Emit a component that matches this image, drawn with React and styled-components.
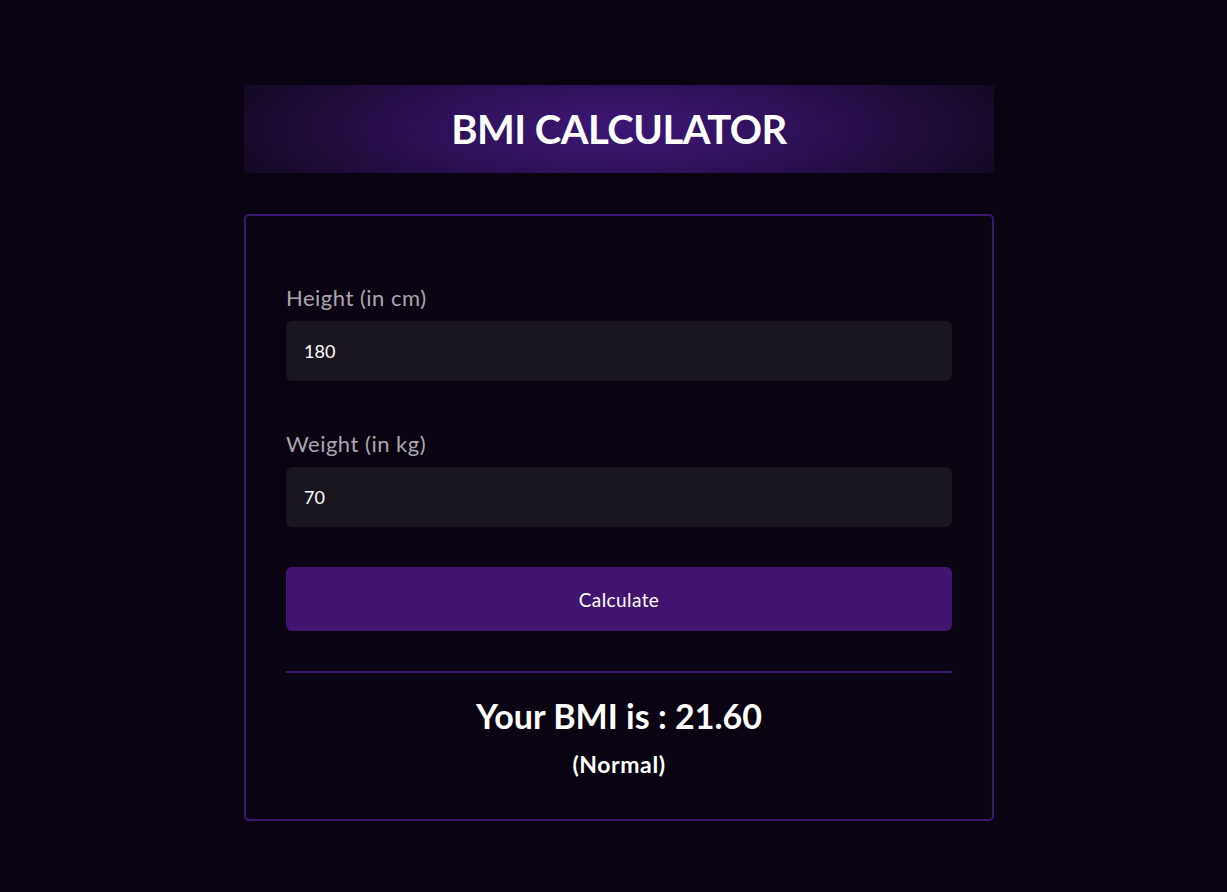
import styled, {createGlobalStyle} from "styled-components";

const Global = createGlobalStyle`
  html, body {
    margin: 0;
    padding: 0;
    background: #0a0412;
    font-family: "Lato", "Noto Sans", sans-serif;
  }
`

const Page = styled.div`
  min-height: 892px;
  padding: 85px 0 0 11px;
  box-sizing: border-box;
  display: flex;
  flex-direction: column;
  align-items: center;
`

const Header = styled.div`
  width: 750px;
  height: 88px;
  display: flex;
  align-items: center;
  justify-content: center;
  background: radial-gradient(ellipse 65% 150% at 50% 50%, #3d1775 0%, #2c1055 40%, #160a26 80%, #0c0515 100%);
`

const Title = styled.h1`
  margin: 0;
  color: #ffffff;
  font-size: 40px;
  font-weight: 700;
  letter-spacing: -0.5px;
`

const Card = styled.div`
  margin-top: 41px;
  width: 750px;
  box-sizing: border-box;
  border: 2px solid #3a1870;
  border-radius: 5px;
  padding: 70px 40px 43px;
  display: flex;
  flex-direction: column;
`

const Field = styled.div`
  display: flex;
  flex-direction: column;
  margin-bottom: ${p => p.$gap || 0}px;
`

const Label = styled.label`
  color: #aaa7ae;
  font-size: 22px;
  line-height: 24px;
  letter-spacing: 0.5px;
  margin-bottom: 11px;
`

const Input = styled.input`
  height: 60px;
  box-sizing: border-box;
  border: none;
  outline: none;
  border-radius: 6px;
  background: #19161f;
  color: #ffffff;
  font-family: inherit;
  font-size: 18px;
  padding: 0 18px;
`

const Button = styled.button`
  height: 64px;
  border: none;
  border-radius: 6px;
  background: #41146f;
  color: #ffffff;
  font-family: inherit;
  font-size: 19px;
  letter-spacing: 0.4px;
  cursor: pointer;
`

const Divider = styled.hr`
  margin: 40px 0 0;
  border: none;
  height: 2px;
  background: #3c1870;
`

const Result = styled.div`
  margin-top: 23px;
  text-align: center;
  color: #ffffff;
  font-size: 34px;
  line-height: 40px;
  font-weight: 700;
`

const Status = styled.div`
  margin-top: 16px;
  text-align: center;
  color: #ffffff;
  font-size: 23px;
  line-height: 24px;
  letter-spacing: 0.6px;
  font-weight: 700;
`

export default function App() {
  return (
    <>
      <Global/>
      <Page>
        <Header>
          <Title>BMI CALCULATOR</Title>
        </Header>
        <Card>
          <Field $gap={51}>
            <Label>Height (in cm)</Label>
            <Input defaultValue="180"/>
          </Field>
          <Field $gap={40}>
            <Label>Weight (in kg)</Label>
            <Input defaultValue="70"/>
          </Field>
          <Button>Calculate</Button>
          <Divider/>
          <Result>Your BMI is : 21.60</Result>
          <Status>(Normal)</Status>
        </Card>
      </Page>
    </>
  )
}
